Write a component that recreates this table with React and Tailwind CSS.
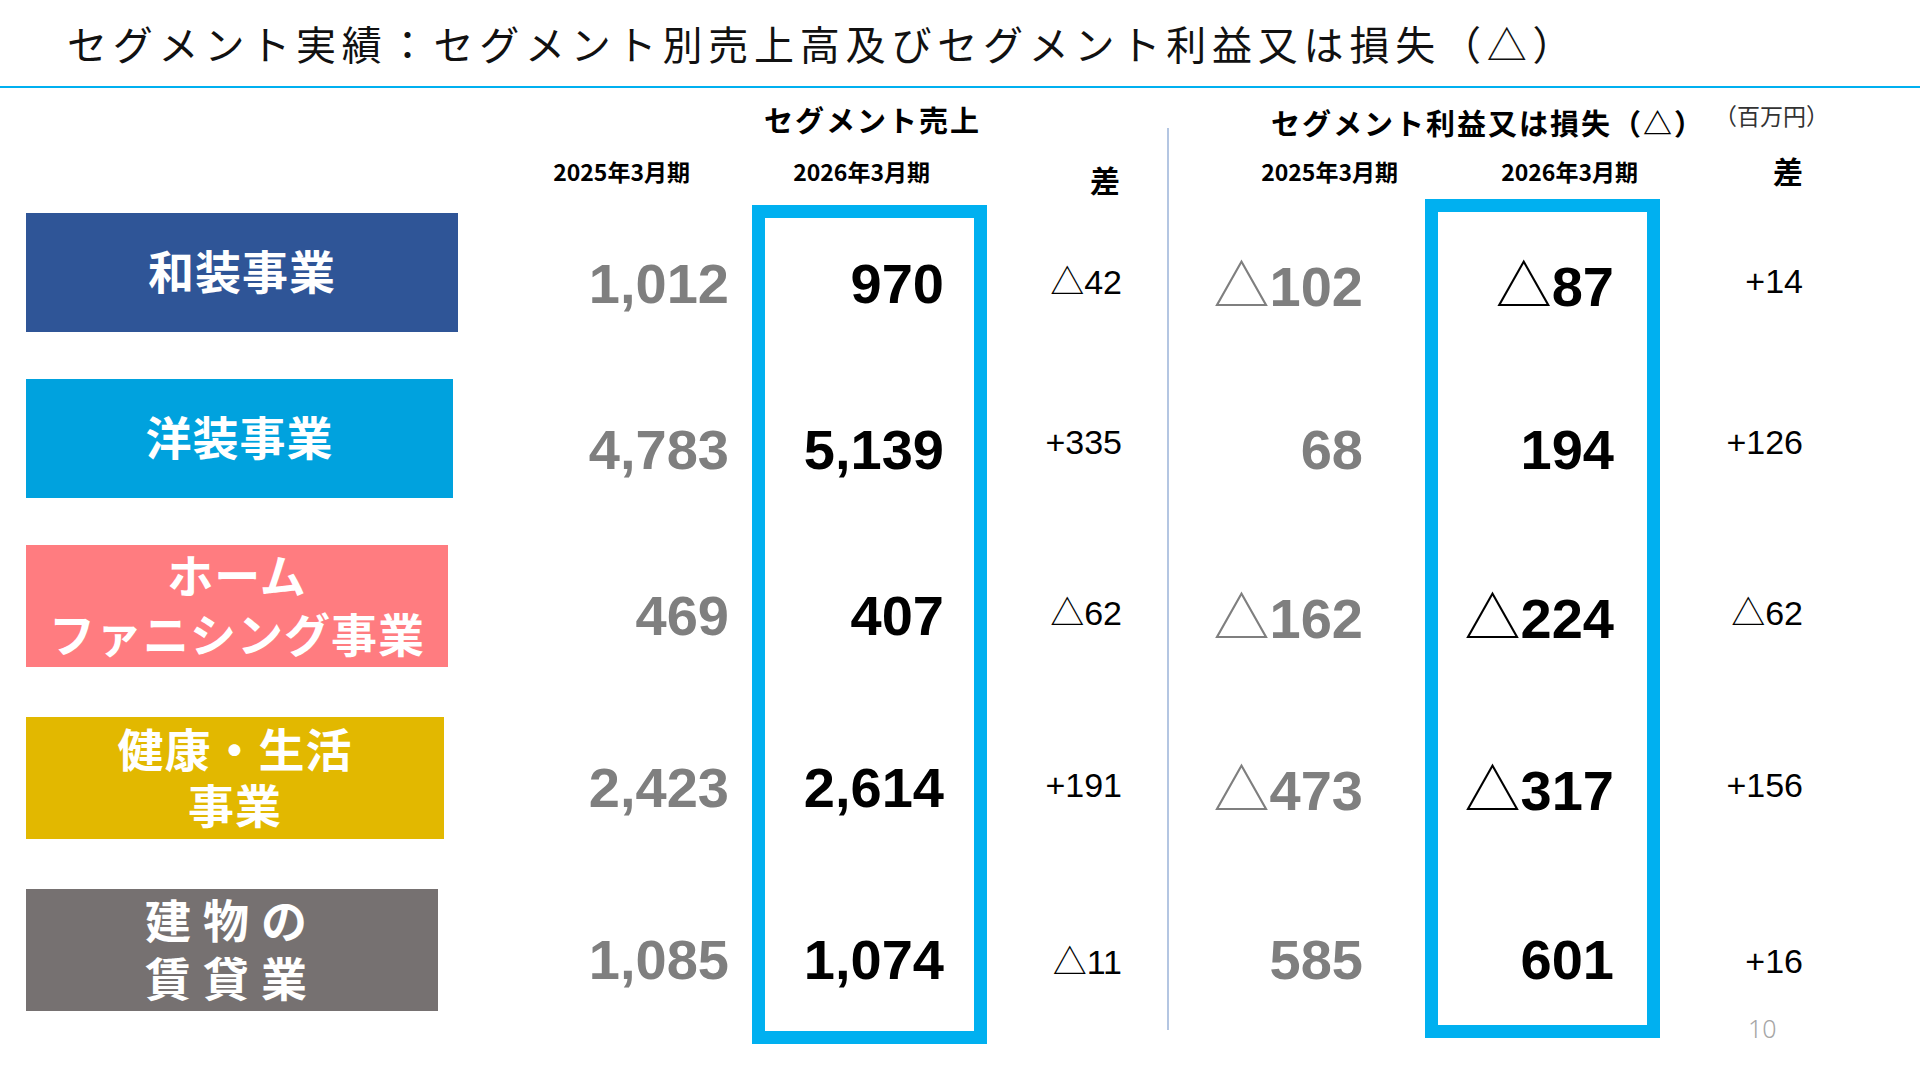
import React from "react";

const JP = "font-['Noto_Sans_CJK_JP',sans-serif]";
const NUM = "font-['Liberation_Sans',Arial,sans-serif]";

const rows = [
  {
    lines: ["和装事業"],
    box: "bg-[#2f5597] w-[432px] h-[119px]",
    lead: "leading-[59px]",
    track: "tracking-[1px]",
    diffH: "h-[136px]",
    s25: "1,012", s26: "970", sd: "△42",
    p25: "△102", p26: "△87", pd: "+14",
  },
  {
    lines: ["洋装事業"],
    box: "bg-[#00a2de] w-[427px] h-[119px]",
    lead: "leading-[59px]",
    track: "tracking-[1px]",
    diffH: "h-[126px]",
    s25: "4,783", s26: "5,139", sd: "+335",
    p25: "68", p26: "194", pd: "+126",
  },
  {
    lines: ["ホーム", "ファニシング事業"],
    box: "bg-[#ff7c80] w-[422px] h-[122px]",
    lead: "leading-[59px]",
    track: "tracking-[1px]",
    diffH: "h-[134px]",
    s25: "469", s26: "407", sd: "△62",
    p25: "△162", p26: "△224", pd: "△62",
  },
  {
    lines: ["健康・生活", "事業"],
    box: "bg-[#e2b800] w-[418px] h-[122px]",
    lead: "leading-[56px]",
    track: "tracking-[1px]",
    diffH: "h-[136px]",
    s25: "2,423", s26: "2,614", sd: "+191",
    p25: "△473", p26: "△317", pd: "+156",
  },
  {
    lines: ["建物の", "賃貸業"],
    box: "bg-[#767171] w-[412px] h-[122px]",
    lead: "leading-[58px]",
    track: "tracking-[12px]",
    diffH: "h-[143px]",
    s25: "1,085", s26: "1,074", sd: "△11",
    p25: "585", p26: "601", pd: "+16",
  },
];

const rowStart = ["row-start-3", "row-start-4", "row-start-5", "row-start-6", "row-start-7"];

// splits the leading △ off so it can use the thin japanese glyph
function Num({ value }) {
  const neg = value.startsWith("△");
  return (
    <span className="whitespace-nowrap">
      {neg && <span className={`${JP} font-normal`}>△</span>}
      {neg ? value.slice(1) : value}
    </span>
  );
}

export default function App() {
  return (
    <div className={`w-[1920px] h-[1080px] bg-white overflow-hidden ${JP}`}>
      {/* title */}
      <div className="h-[88px] flex items-center pl-[67px] border-b-2 border-[#00b0f0]">
        <h1 className="text-[40px] tracking-[5.8px] font-normal text-[#111] leading-none whitespace-nowrap">
          セグメント実績：セグメント別売上高及びセグメント利益又は損失（△）
        </h1>
      </div>

      <div className="grid grid-cols-[470px_282px_235px_180px_258px_235px_260px] grid-rows-[58px_67px_166px_166px_172px_172px_122px_70px]">
        {/* group headers */}
        <div className="col-start-3 row-start-1 flex items-center justify-center pl-[6px] pt-[4px] text-[29px] font-bold tracking-[2px] text-black leading-none whitespace-nowrap">
          セグメント売上
        </div>
        <div className="col-start-5 col-span-3 row-start-1 flex items-center pl-[104px] pt-[10px] text-[29px] font-bold tracking-[2px] text-black leading-none whitespace-nowrap">
          セグメント利益又は損失（△）
        </div>
        <div className="col-start-7 row-start-1 flex items-center pl-[54px] pb-[4px] text-[23px] text-[#333] leading-none whitespace-nowrap">
          （百万円）
        </div>

        {/* year headers */}
        <div className="col-start-2 row-start-2 flex justify-end pr-[62px] pt-[14px] text-[23px] font-bold leading-none text-black">2025年3月期</div>
        <div className="col-start-3 row-start-2 flex justify-end pr-[57px] pt-[14px] text-[23px] font-bold leading-none text-black">2026年3月期</div>
        <div className="col-start-4 row-start-2 flex justify-end pr-[47px] pt-[18px] text-[30px] font-bold leading-none text-black">差</div>
        <div className="col-start-5 row-start-2 flex justify-end pr-[27px] pt-[14px] text-[23px] font-bold leading-none text-black">2025年3月期</div>
        <div className="col-start-6 row-start-2 flex justify-end pr-[22px] pt-[14px] text-[23px] font-bold leading-none text-black">2026年3月期</div>
        <div className="col-start-7 row-start-2 flex justify-end pr-[117px] pt-[9px] text-[30px] font-bold leading-none text-black">差</div>

        {/* highlight frames and divider */}
        <div className="col-start-3 row-start-3 row-span-5 -mt-[8px] -mb-[33px] border-[13px] border-[#00b0f0]" />
        <div className="col-start-6 row-start-3 row-span-5 -mt-[14px] -mb-[27px] border-[13px] border-[#00b0f0]" />
        <div className="col-start-5 row-start-1 row-span-7 mt-[40px] -mb-[19px] w-[2px] bg-[#b4c6e2] justify-self-start" />

        {rows.map((r, i) => (
          <React.Fragment key={i}>
            <div className={`col-start-1 ${rowStart[i]} self-start pl-[26px]`}>
              <div className={`${r.box} flex flex-col items-center justify-center pb-[7px] text-white font-bold text-[46px] ${r.lead} ${r.track}`}>
                {r.lines.map((l) => (
                  <div key={l} className="whitespace-nowrap">{l}</div>
                ))}
              </div>
            </div>

            <div className={`col-start-2 ${rowStart[i]} self-start h-[142px] flex items-center justify-end pr-[23px] ${NUM} text-[56px] font-bold text-[#7f7f7f] leading-none`}>
              <Num value={r.s25} />
            </div>
            <div className={`col-start-3 ${rowStart[i]} self-start h-[142px] flex items-center justify-end pr-[43px] ${NUM} text-[56px] font-bold text-black leading-none`}>
              <Num value={r.s26} />
            </div>
            <div className={`col-start-4 ${rowStart[i]} self-start ${r.diffH} flex items-center justify-end pr-[45px] ${NUM} text-[34px] text-black leading-none`}>
              <Num value={r.sd} />
            </div>
            <div className={`col-start-5 ${rowStart[i]} self-start h-[142px] flex items-center justify-end pr-[62px] ${NUM} text-[56px] font-bold text-[#7f7f7f] leading-none`}>
              <Num value={r.p25} />
            </div>
            <div className={`col-start-6 ${rowStart[i]} self-start h-[142px] flex items-center justify-end pr-[46px] ${NUM} text-[56px] font-bold text-black leading-none`}>
              <Num value={r.p26} />
            </div>
            <div className={`col-start-7 ${rowStart[i]} self-start ${r.diffH} flex items-center justify-end pr-[117px] ${NUM} text-[34px] text-black leading-none`}>
              <Num value={r.pd} />
            </div>
          </React.Fragment>
        ))}

        {/* page number */}
        <div className="col-start-7 row-start-8 pl-[88px] pt-[5px] font-['Noto_Sans',sans-serif] font-light text-[25px] text-[#a6a6a6] leading-none">
          10
        </div>
      </div>
    </div>
  );
}
